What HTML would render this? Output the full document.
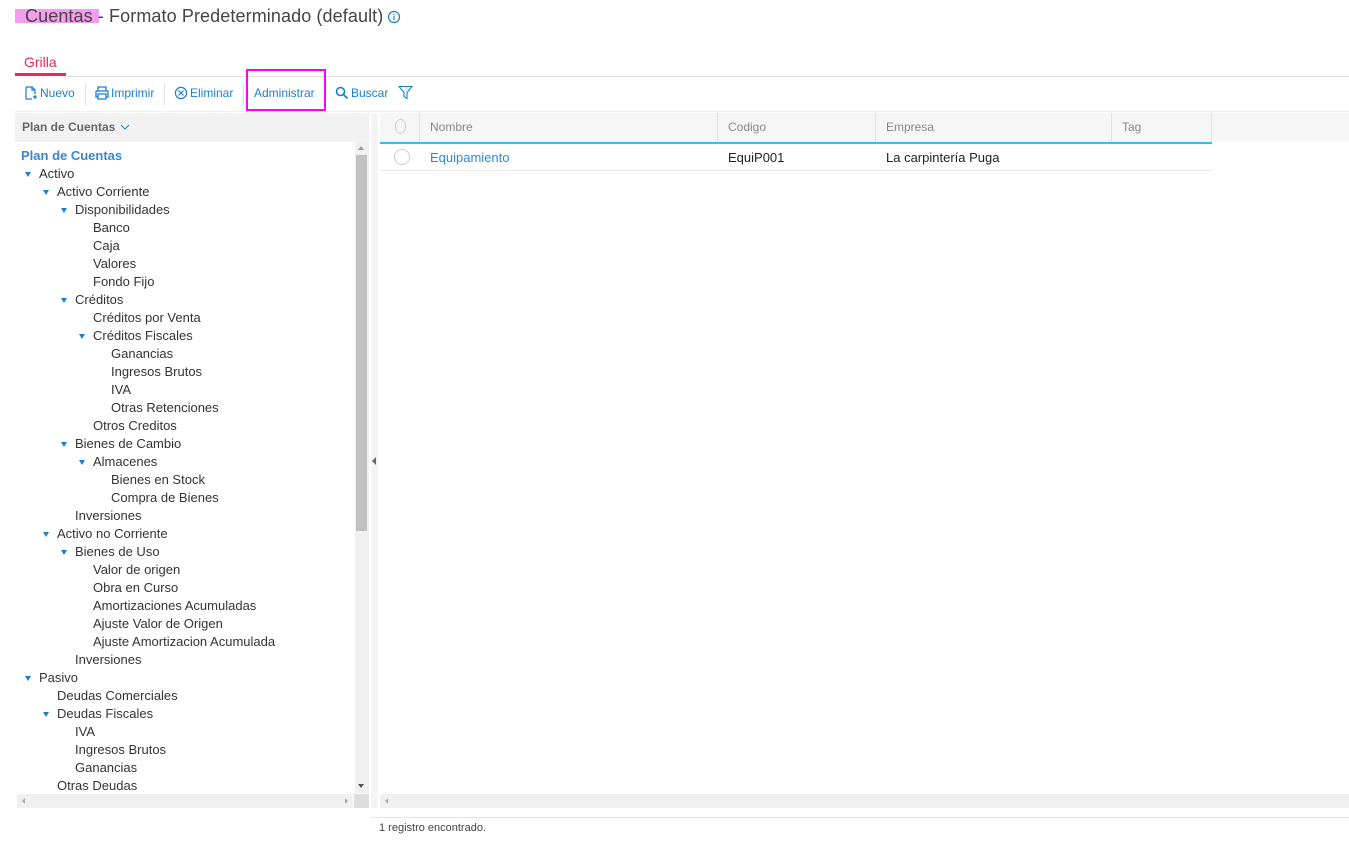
<!DOCTYPE html>
<html><head><meta charset="utf-8"><style>
*{margin:0;padding:0;box-sizing:border-box}
body{width:1349px;height:843px;background:#fff;font-family:"Liberation Sans",sans-serif;position:relative;overflow:hidden;color:#333}
.a{position:absolute}
.tb{font-size:12px;color:#1a7fd0;top:86px;height:14px;line-height:14px}
.sep{top:82px;width:1px;height:24px;background:#e3e3e3}
.tr{position:absolute;font-size:13px;color:#333;line-height:18px;white-space:nowrap}
.tg{position:absolute;width:0;height:0;border-left:3px solid transparent;border-right:3px solid transparent;border-top:5px solid #1a7fd0}
.hd{font-size:12px;color:#888;top:120px}
.cs{top:113px;width:1px;height:29px;background:#e0e0e0}
</style></head><body>
<div class="a" style="left:15px;top:9px;width:84px;height:14px;background:#f59ef0"></div>
<div class="a" style="left:25px;top:6px;font-size:18px;color:#444;letter-spacing:0.1px">Cuentas - Formato Predeterminado (default)</div>
<svg class="a" style="left:387px;top:10px" width="14" height="14" viewBox="0 0 14 14"><circle cx="7" cy="7" r="5.5" fill="none" stroke="#1a7fd0" stroke-width="1.2"/><rect x="6.4" y="6" width="1.2" height="4" fill="#1a7fd0"/><rect x="6.4" y="3.8" width="1.2" height="1.2" fill="#1a7fd0"/></svg>
<div class="a" style="left:24px;top:54px;font-size:14px;color:#e8295c">Grilla</div>
<div class="a" style="left:15px;top:73px;width:51px;height:3px;background:#e8295c"></div>
<div class="a" style="left:66px;top:76px;width:1283px;height:1px;background:#ddd"></div>
<svg class="a" style="left:24px;top:86px" width="14" height="14" viewBox="0 0 14 14"><path d="M2 1h6l3 3v4M2 1v12h6M8 1v3h3M11 9v4M9 11h4" fill="none" stroke="#1a7fd0" stroke-width="1.2"/></svg>
<div class="a tb" style="left:40px">Nuevo</div>
<div class="a sep" style="left:85px"></div>
<svg class="a" style="left:95px;top:86px" width="14" height="14" viewBox="0 0 14 14"><path d="M3 5V1h8v4M1 5h12v6h-2M3 11H1V5M3 8h8v5H3z" fill="none" stroke="#1a7fd0" stroke-width="1.3"/></svg>
<div class="a tb" style="left:111px">Imprimir</div>
<div class="a sep" style="left:164px"></div>
<svg class="a" style="left:174px;top:86px" width="14" height="14" viewBox="0 0 14 14"><circle cx="7" cy="7" r="5.6" fill="none" stroke="#1a7fd0" stroke-width="1.2"/><path d="M4.5 4.5l5 5M9.5 4.5l-5 5" stroke="#1a7fd0" stroke-width="1.2"/></svg>
<div class="a tb" style="left:190px">Eliminar</div>
<div class="a sep" style="left:243px"></div>
<div class="a" style="left:246px;top:69px;width:80px;height:42px;border:2px solid #f0f"></div>
<div class="a tb" style="left:254px">Administrar</div>
<svg class="a" style="left:335px;top:86px" width="14" height="14" viewBox="0 0 14 14"><circle cx="5.5" cy="5.5" r="4" fill="none" stroke="#1a7fd0" stroke-width="1.6"/><path d="M8.5 8.5l4 4" stroke="#1a7fd0" stroke-width="1.8"/></svg>
<div class="a tb" style="left:351px">Buscar</div>
<svg class="a" style="left:398px;top:85px" width="15" height="15" viewBox="0 0 15 15"><path d="M1 1.5h13L9 7.5v6l-3-2v-4z" fill="none" stroke="#1a7fd0" stroke-width="1.1"/></svg>
<div class="a" style="left:15px;top:111px;width:1334px;height:1px;background:#eee"></div>
<div class="a" style="left:15px;top:113px;width:354px;height:29px;background:#f2f2f2"></div>
<div class="a" style="left:22px;top:120px;font-size:12px;font-weight:bold;color:#666">Plan de Cuentas</div>
<svg class="a" style="left:120px;top:124px" width="10" height="7"><path d="M1 1l4 4 4-4" fill="none" stroke="#1a7fd0" stroke-width="1"/></svg>
<div class="a" style="left:355px;top:142px;width:14px;height:651px;background:#f0f0f0"></div>
<div class="a" style="left:356px;top:155px;width:11px;height:376px;background:#c1c1c1"></div>
<div class="a" style="left:358px;top:146px;border-left:3.5px solid transparent;border-right:3.5px solid transparent;border-bottom:4px solid #999"></div>
<div class="a" style="left:358px;top:784px;border-left:3.5px solid transparent;border-right:3.5px solid transparent;border-top:4px solid #555"></div>
<div class="a" style="left:17px;top:794px;width:336px;height:14px;background:#f0f0f0"></div>
<div class="a" style="left:354px;top:794px;width:15px;height:14px;background:#ddd"></div>
<div class="a" style="left:22px;top:798px;border-top:3px solid transparent;border-bottom:3px solid transparent;border-right:3px solid #aaa"></div>
<div class="a" style="left:345px;top:798px;border-top:3px solid transparent;border-bottom:3px solid transparent;border-left:3px solid #aaa"></div>
<div class="a" style="left:371px;top:113px;width:7px;height:695px;background:#f4f4f4"></div>
<div class="a" style="left:372px;top:457px;border-top:4px solid transparent;border-bottom:4px solid transparent;border-right:4px solid #666"></div>
<div class="tr" style="left:21px;top:147px;font-weight:bold;color:#3a86d0">Plan de Cuentas</div>
<div id="tree"></div>
<div class="a" style="left:380px;top:113px;width:969px;height:29px;background:#f6f6f6"></div>
<div class="a" style="left:380px;top:142px;width:832px;height:2px;background:#1ec8f0"></div>
<div class="a cs" style="left:419px"></div><div class="a cs" style="left:717px"></div><div class="a cs" style="left:875px"></div><div class="a cs" style="left:1111px"></div><div class="a cs" style="left:1211px"></div>
<div class="a" style="left:395px;top:119px;width:11px;height:15px;border:1px solid #ccc;border-radius:50%"></div>
<div class="a hd" style="left:430px">Nombre</div>
<div class="a hd" style="left:728px">Codigo</div>
<div class="a hd" style="left:886px">Empresa</div>
<div class="a hd" style="left:1122px">Tag</div>
<div class="a" style="left:394px;top:149px;width:16px;height:16px;border:1px solid #ccc;border-radius:50%"></div>
<div class="a" style="left:430px;top:150px;font-size:13px;color:#2a8ae0">Equipamiento</div>
<div class="a" style="left:728px;top:150px;font-size:13px;color:#222">EquiP001</div>
<div class="a" style="left:886px;top:150px;font-size:13px;color:#222">La carpintería Puga</div>
<div class="a" style="left:380px;top:170px;width:832px;height:1px;background:#e8e8e8"></div>
<div class="a" style="left:380px;top:794px;width:969px;height:14px;background:#f0f0f0"></div>
<div class="a" style="left:385px;top:798px;border-top:3px solid transparent;border-bottom:3px solid transparent;border-right:3px solid #aaa"></div>
<div class="a" style="left:370px;top:817px;width:979px;height:1px;background:#e5e5e5"></div>
<div class="a" style="left:379px;top:822px;font-size:11px;color:#444">1 registro encontrado.</div>
<script>
var d=[[1,"Activo",1],[2,"Activo Corriente",1],[3,"Disponibilidades",1],[4,"Banco"],[4,"Caja"],[4,"Valores"],[4,"Fondo Fijo"],[3,"Créditos",1],[4,"Créditos por Venta"],[4,"Créditos Fiscales",1],[5,"Ganancias"],[5,"Ingresos Brutos"],[5,"IVA"],[5,"Otras Retenciones"],[4,"Otros Creditos"],[3,"Bienes de Cambio",1],[4,"Almacenes",1],[5,"Bienes en Stock"],[5,"Compra de Bienes"],[3,"Inversiones"],[2,"Activo no Corriente",1],[3,"Bienes de Uso",1],[4,"Valor de origen"],[4,"Obra en Curso"],[4,"Amortizaciones Acumuladas"],[4,"Ajuste Valor de Origen"],[4,"Ajuste Amortizacion Acumulada"],[3,"Inversiones"],[1,"Pasivo",1],[2,"Deudas Comerciales"],[2,"Deudas Fiscales",1],[3,"IVA"],[3,"Ingresos Brutos"],[3,"Ganancias"],[2,"Otras Deudas"]];
var h="";d.forEach(function(r,i){var y=165+i*18,x=39+(r[0]-1)*18;
if(r[2])h+='<div class="tg" style="left:'+(x-14)+'px;top:'+(y+7)+'px"></div>';
h+='<div class="tr" style="left:'+x+'px;top:'+y+'px">'+r[1]+'</div>';});
document.getElementById("tree").outerHTML=h;
</script>
</body></html>
